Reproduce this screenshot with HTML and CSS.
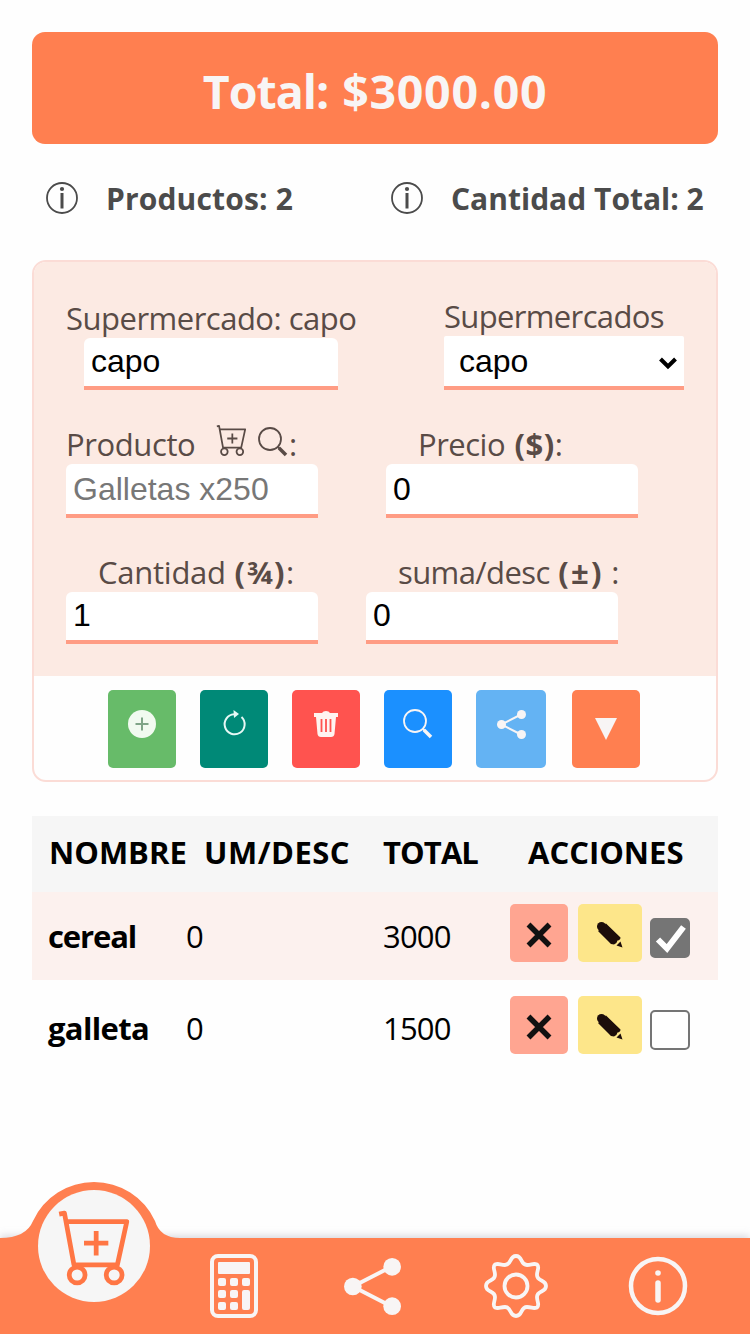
FILE: index.html
```html
<!DOCTYPE html>
<html lang="es">
<head>
<meta charset="utf-8">
<title>Lista de compras</title>
<link rel="stylesheet" href="styles.css">
</head>
<body>
<svg width="0" height="0" class="defs">
  <symbol id="cart" viewBox="0 0 64 70">
    <g fill="none" stroke="currentColor" stroke-linejoin="round">
      <path d="M0 3l5-1 9 49h41l9-41H6M35 19v23M23.500 30.500h23"/>
      <circle cx="17" cy="60.500" r="7.500"/><circle cx="52" cy="60.500" r="7.500"/>
    </g>
  </symbol>
  <symbol id="lens" viewBox="0 0 30 30">
    <g fill="none" stroke="currentColor">
      <circle cx="12" cy="12" r="11" stroke-width="1.8"/>
      <path d="M19.500 19.500l2 2" stroke-width="2"/>
      <path d="M21 21l7 7" stroke-width="3.500"/>
    </g>
  </symbol>
  <symbol id="share" viewBox="0 0 58 58">
    <path d="M48 9L9 29l39 20" fill="none" stroke="currentColor" stroke-width="4"/>
    <g fill="currentColor"><circle cx="49" cy="9" r="9"/><circle cx="9" cy="29" r="9"/><circle cx="49" cy="49" r="9"/></g>
  </symbol>
  <symbol id="info" viewBox="0 0 32 32">
    <circle cx="16" cy="16" r="15" fill="none" stroke="currentColor" stroke-width="1.800"/>
    <path d="M16 11V26.500" stroke="currentColor" stroke-width="3"/>
    <circle cx="16" cy="7" r="2.100" fill="currentColor"/>
  </symbol>
  <symbol id="cross" viewBox="0 0 26 26">
    <path d="M2.500 2.500L23.500 23.500M23.500 2.500L2.500 23.500" stroke="#111" stroke-width="5.500"/>
  </symbol>
  <symbol id="pencil" viewBox="0 0 26 26">
    <g fill="#1d0d0a"><circle cx="4.500" cy="4.500" r="4.500"/><path d="M1 9L9 1.500L23.500 15.500Q23.500 18 20.500 18.500Q20 21.500 17 22.500L14 22zM19.500 23.500L23.500 19.500L25.500 25.500z"/></g>
  </symbol>
</svg>
<main class="page">
  <h1 class="total"><span class="total-label">Total: </span><span class="total-value">$3000.00</span></h1>
  <div class="stats">
    <div class="stat"><svg><use href="#info"/></svg><b>Productos: 2</b></div>
    <div class="stat"><svg><use href="#info"/></svg><b class="t-cant">Cantidad Total: 2</b></div>
  </div>
  <section class="card">
    <div class="fields">
      <div class="row row-market">
        <div class="field"><label class="l-super">Supermercado: capo</label><div class="input input-market">capo</div></div>
        <div class="field"><label class="l-supers">Supermercados</label><div class="input select">capo<svg viewBox="0 0 18 12"><path d="M1.500 2L9 9.500L16.500 2" fill="none" stroke="#000" stroke-width="4"/></svg></div></div>
      </div>
      <div class="row row-product">
        <div class="field"><label class="l-producto"><span>Producto</span><svg class="mini-cart"><use href="#cart"/></svg><svg class="mini-lens"><use href="#lens"/></svg>:</label><div class="input placeholder">Galletas x250</div></div>
        <div class="field"><label class="l-precio">Precio <b>($)</b>:</label><div class="input">0</div></div>
      </div>
      <div class="row row-amount">
        <div class="field"><label class="l-cantidad">Cantidad <b>(¾)</b>:</label><div class="input">1</div></div>
        <div class="field"><label class="l-suma">suma/desc <b>(±)</b> :</label><div class="input">0</div></div>
      </div>
    </div>
    <div class="buttons">
      <button class="btn green"><svg width="28" height="28" viewBox="0 0 28 28"><circle cx="14" cy="14" r="14" fill="#f1faf0"/><path d="M14 7.500v13M7.500 14h13" stroke="#7fa487" stroke-width="2"/></svg></button>
      <button class="btn teal"><svg width="22" height="28" viewBox="0 0 22 28"><path d="M18.500 7A10 10 0 1 1 11 4.300" fill="none" stroke="#e6f8f5" stroke-width="2"/><path d="M10.500 0L16 4L11 8z" fill="#e6f8f5"/></svg></button>
      <button class="btn red"><svg width="24" height="28" viewBox="0 0 24 28"><path d="M0 3h8Q9 1 12 1T16 3h8v4h-2L20.500 24Q20 27 17 27H7Q4 27 3.500 24L2 7H0z" fill="#fff3f0"/><path d="M7.500 9v13M12 9v13M16.500 9v13" stroke="#ff534f" stroke-width="1.800"/></svg></button>
      <button class="btn blue"><svg width="30" height="30"><use href="#lens"/></svg></button>
      <button class="btn sky"><svg width="29" height="29"><use href="#share"/></svg></button>
      <button class="btn orange"><svg width="22" height="22" viewBox="0 0 22 22"><path d="M0 0h22L11 22z" fill="currentColor"/></svg></button>
    </div>
  </section>
  <section class="table">
    <div class="tr head"><b>NOMBRE</b><b class="h-um">UM/DESC</b><b class="h-total">TOTAL</b><b>ACCIONES</b></div>
    <div class="tr striped"><b class="n-cereal">cereal</b><span>0</span><span>3000</span>
      <div class="actions"><button class="act del"><svg><use href="#cross"/></svg></button><button class="act edit"><svg><use href="#pencil"/></svg></button><i class="check on"><svg viewBox="0 0 32 32"><path d="M4 17.500l9 9L29.500 5" fill="none" stroke="#fff" stroke-width="6"/></svg></i></div></div>
    <div class="tr"><b class="n-galleta">galleta</b><span>0</span><span>1500</span>
      <div class="actions"><button class="act del"><svg><use href="#cross"/></svg></button><button class="act edit"><svg><use href="#pencil"/></svg></button><i class="check"></i></div></div>
  </section>
</main>
<nav class="nav">
  <svg class="bump" width="188" height="66" viewBox="0 0 188 66"><path d="M0 57Q26 57 33 40A67.200 67.200 0 0 1 155 40Q160 57 180 57V66H0z" fill="#ff7f50"/></svg>
  <a class="active"><svg width="68" height="74"><use href="#cart"/></svg></a>
  <a><svg width="48" height="64" viewBox="0 0 48 64"><rect x="2" y="2" width="44" height="60" rx="6" fill="none" stroke="#f8f5f5" stroke-width="4"/><g fill="#f8f5f5"><rect x="8" y="8" width="32" height="12" rx="1"/><rect x="8" y="24" width="8" height="8" rx="2"/><rect x="20" y="24" width="8" height="8" rx="2"/><rect x="32" y="24" width="8" height="8" rx="2"/><rect x="8" y="36" width="8" height="8" rx="2"/><rect x="20" y="36" width="8" height="8" rx="2"/><rect x="32" y="36" width="8" height="20" rx="2"/><rect x="8" y="48" width="8" height="8" rx="2"/><rect x="20" y="48" width="8" height="8" rx="2"/></g></svg></a>
  <a><svg width="57" height="57"><use href="#share"/></svg></a>
  <a><svg width="66" height="66" viewBox="-33 -33 66 66" fill="none" stroke="#f8f5f5" stroke-width="3.800"><path d="M0-30C7-30 4-21 11-21C16-21 17-23 21-21.500C24-19 21-16 21-11C21-4 30-7 30 0C30 7 21 4 21 11C21 16 24 19 21 21.500C17 23 16 21 11 21C4 21 7 30 0 30C-7 30-4 21-11 21C-16 21-17 23-21 21.500C-24 19-21 16-21 11C-21 4-30 7-30 0C-30-7-21-4-21-11C-21-16-24-19-21-21.500C-17-23-16-21-11-21C-4-21-7-30 0-30Z"/><circle r="11.500"/></svg></a>
  <a><svg width="58" height="58" viewBox="0 0 58 58"><circle cx="29" cy="29" r="27" fill="none" stroke="#f8f5f5" stroke-width="4.500"/><path d="M29 26v17" stroke="#f8f5f5" stroke-width="5.500" stroke-linecap="round"/><circle cx="29" cy="16" r="2.800" fill="#f8f5f5"/></svg></a>
</nav>
</body>
</html>
```
FILE: styles.css
```css
* { box-sizing: border-box; }
body { margin: 0; background: #fefefe; color: #111; font: 31px/42px "Open Sans", "Noto Sans", sans-serif; }
svg { display: block; flex: none; overflow: visible; }
symbol { overflow: visible; }
.defs { position: absolute; }
button { border: 0; padding: 0; }
span, b, label { white-space: nowrap; }
.page { height: 1238px; padding: 32px 32px 0; overflow: hidden; }
.total { height: 112px; margin: 0; padding-top: 5px; display: flex; gap: 14px; align-items: center; justify-content: center; border-radius: 13px; background: #ff7f50; color: #f8f5f5; font-size: 46.5px; }
.total-label { letter-spacing: -1px; }
.total-value { letter-spacing: .7px; }
.stats { display: flex; height: 116px; padding: 34px 0 0 14px; color: #4b4b4b; }
.stat { display: flex; flex: none; width: 345px; height: 42px; }
.stat svg { width: 32px; height: 32px; margin: 4px 28px 0 0; }
.stat b { font-size: 30px; letter-spacing: .15px; }
.stat .t-cant { letter-spacing: 0; }
.card { height: 522px; border: 2px solid #fbdcd6; border-radius: 14px; overflow: hidden; }
.fields { height: 414px; padding: 32px 32px 0; background: #fceae3; color: #594b46; }
.row { display: flex; }
.row-market { gap: 88px; align-items: flex-end; }
.row-product { margin-top: 32px; gap: 68px; }
.row-amount { margin-top: 32px; gap: 48px; }
.field { display: flex; flex-direction: column; }
.row-market .field:first-child { width: 290px; }
.field label { height: 42px; padding-top: 1px; }
.input { width: 252px; height: 54px; padding: 5px 7px; background: #fff; border-bottom: 4px solid #ff9c84; border-radius: 6px 6px 0 0; color: #000; font: 32px/40px "Liberation Sans", sans-serif; }
.row-amount .input { height: 52px; padding-top: 3px; }
.input-market { width: 254px; height: 52px; margin-left: 18px; padding-top: 3px; }
.select { display: flex; width: 240px; padding: 5px 7px 0 15px; justify-content: space-between; border-radius: 2px 2px 0 0; }
.select svg { width: 18px; height: 12px; margin-top: 16px; }
.placeholder { color: #777; }
.l-super { letter-spacing: -.5px; }
.l-supers { letter-spacing: -.65px; }
.l-producto { display: flex; }
.l-producto span { width: 150px; letter-spacing: -.4px; }
.mini-cart { width: 30px; height: 31px; margin-top: 2px; stroke-width: 4; }
.mini-lens { width: 30px; height: 30px; margin: 4px 1px 0 12px; }
.l-precio { padding-left: 32px; letter-spacing: -.5px; }
.l-precio b { letter-spacing: .5px; margin-left: 2px; }
.l-cantidad { padding-left: 32px; letter-spacing: -.25px; }
.l-cantidad b { letter-spacing: 1.4px; margin-left: 1px; }
.l-suma { padding-left: 32px; letter-spacing: -.6px; }
.l-suma b { letter-spacing: 2.3px; margin-left: 1px; }
.buttons { display: flex; gap: 24px; height: 104px; padding: 14px 0 0 74px; }
.btn { width: 68px; height: 78px; padding-bottom: 10px; display: flex; align-items: center; justify-content: center; border-radius: 5px; color: #f8f5f5; }
.green { background: #67bb69; }
.teal { background: #008977; }
.red { background: #ff534f; }
.blue { background: #1b90ff; }
.sky { width: 70px; background: #64b3f3; }
.orange { margin-left: 2px; padding-bottom: 1px; background: #ff7f50; }
.table { margin-top: 34px; color: #000; }
.tr { display: grid; grid-template-columns: 138px 197px 128px 1fr; height: 92px; padding: 0 0 4px 16px; align-items: center; }
.tr > span { letter-spacing: -.8px; }
.tr.striped { background: linear-gradient(#fcf1ee 88px, transparent 88px); }
.tr.head { height: 76px; grid-template-columns: 155px 179px 145px 1fr; padding-left: 17px; background: #f6f6f6; }
.h-um { letter-spacing: .5px; }
.h-total { letter-spacing: -.9px; }
.n-cereal { letter-spacing: -1.1px; }
.n-galleta { letter-spacing: -.65px; }
.actions { display: flex; margin-left: -1px; margin-top: -6px; }
.act { display: flex; width: 58px; height: 58px; justify-content: center; align-items: center; border-radius: 5px; background: #ffa591; }
.act svg { width: 26px; height: 26px; margin-top: 3px; }
.edit { width: 64px; margin: 0 8px 0 10px; background: #fde68a; }
.check { width: 40px; height: 40px; margin-top: 14px; padding: 2px; border: 2px solid #757575; border-radius: 5px; background: #fff; }
.on { background: #757575; }
.nav { position: relative; display: grid; grid-template: 96px / 188px 92px 184px 104px 180px; height: 96px; background: #ff7f50; color: #f8f5f5; box-shadow: 0 -2px 8px #9997a866; }
.nav a { display: flex; align-items: center; justify-content: center; }
.bump { position: absolute; left: 0; top: -57px; }
.nav .active { width: 112px; height: 112px; position: relative; top: -48px; margin-left: 38px; padding: 4px 2px 0 0; border-radius: 50%; background: #f6f6f6; color: #ff7644; stroke-width: 4.500; }
```
